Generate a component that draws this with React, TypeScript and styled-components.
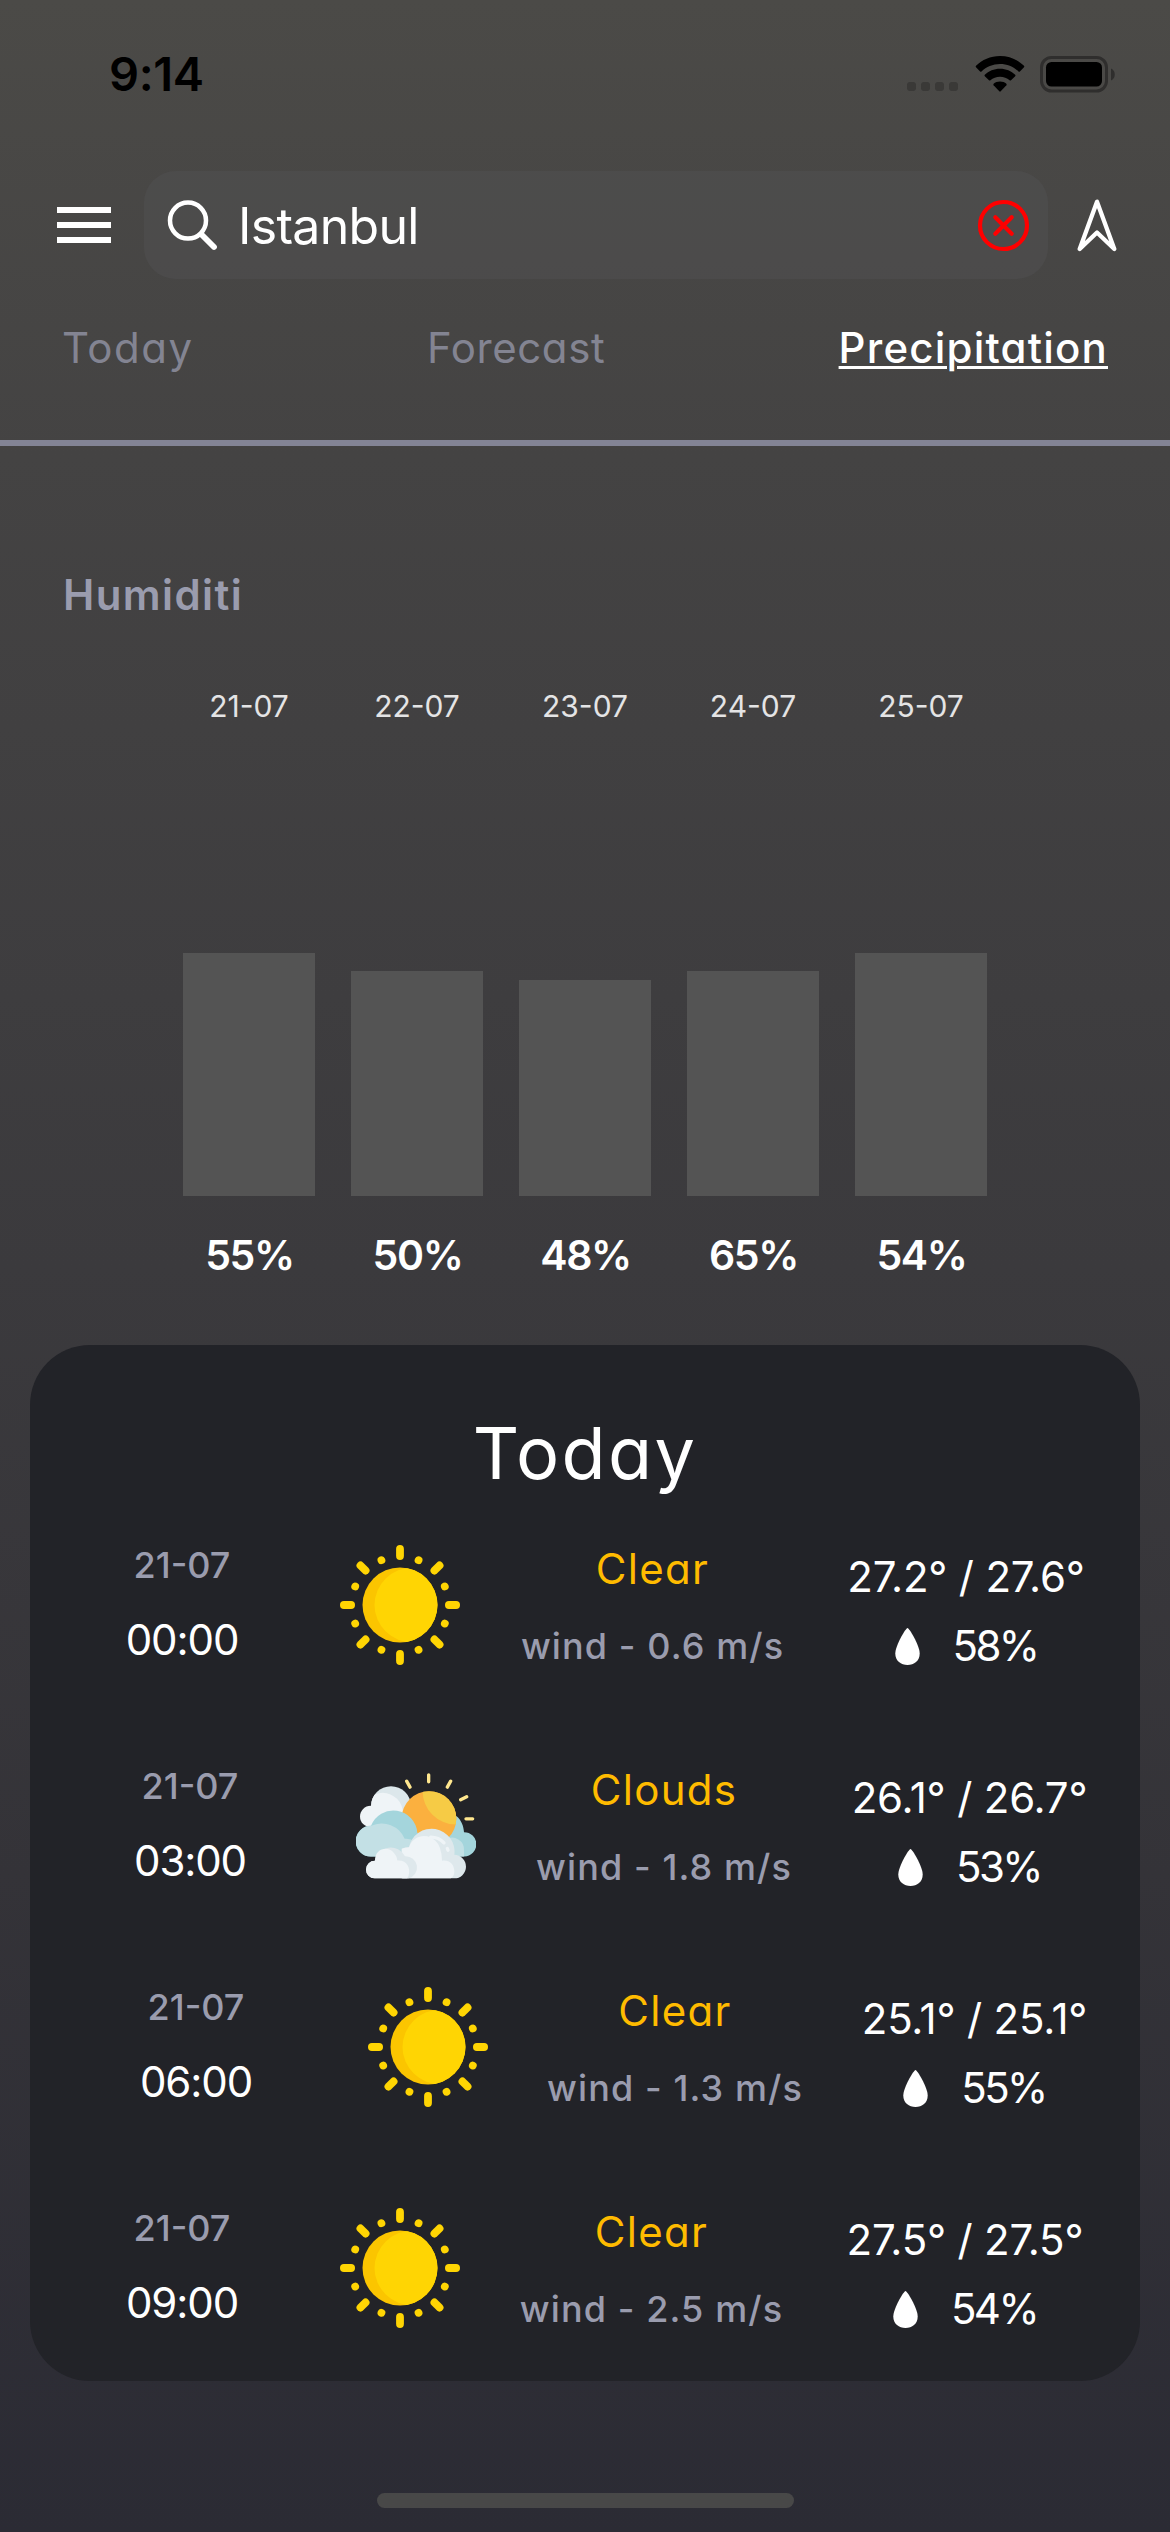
import React from "react";
import styled, { createGlobalStyle } from "styled-components";

const GlobalStyle = createGlobalStyle`
  * { box-sizing: border-box; }
  body {
    margin: 0;
    font-family: Inter, "Open Sans", sans-serif;
    color: #fff;
    background: #2c2c35;
  }
`;

const Screen = styled.main`
  width: 1170px;
  height: 2532px;
  display: flex;
  flex-direction: column;
  overflow: hidden;
  background: linear-gradient(180deg, #4b4a47 0%, #444343 18%, #3b3a3d 50%, #343338 74%, #2b2b34 100%);
  font-feature-settings: "cv11";
`;

const StatusBar = styled.header`
  height: 148px;
  display: flex;
  align-items: center;
  justify-content: space-between;
  padding: 0 54px 0 109px;
  color: #000;
`;

const Clock = styled.span`
  font-size: 47px;
  font-weight: 600;
  line-height: 60px;
  letter-spacing: -0.4px;
  font-feature-settings: normal;
`;

const StatusIcons = styled.div`
  display: flex;
  align-items: center;
`;

const Header = styled.div`
  height: 108px;
  margin-top: 23px;
  padding: 0 52px 0 57px;
  display: flex;
  align-items: center;
`;

const MenuButton = styled.button`
  width: 54px;
  height: 36px;
  padding: 0;
  border: 0;
  background: none;
  display: flex;
  flex-direction: column;
  justify-content: space-between;
`;

const MenuLine = styled.span`
  width: 54px;
  height: 6px;
  background: #fff;
`;

const SearchBox = styled.div`
  width: 904px;
  height: 108px;
  margin-left: 33px;
  margin-right: 28px;
  padding: 0 18px 0 23px;
  display: flex;
  align-items: center;
  border-radius: 32px;
  background: rgba(85, 85, 88, 0.38);
`;

const SearchText = styled.span`
  flex: 1;
  padding: 2px 0 0 17px;
  font-size: 50px;
  line-height: 60px;
  letter-spacing: -0.7px;
  font-feature-settings: normal;
`;

const Tabs = styled.nav`
  height: 50px;
  margin-top: 44px;
  padding: 0 62px;
  display: flex;
  justify-content: space-between;
`;

const Tab = styled.a<{ $active?: boolean; $tracking: number }>`
  font-size: 42px;
  line-height: 50px;
  white-space: nowrap;
  letter-spacing: ${(p) => p.$tracking}px;
  font-weight: ${(p) => (p.$active ? 500 : 400)};
  color: ${(p) => (p.$active ? "#fff" : "#838492")};
  text-decoration: ${(p) => (p.$active ? "underline" : "none")};
  text-decoration-thickness: 3px;
  text-underline-offset: 3px;
`;

const Divider = styled.div`
  height: 6px;
  flex: none;
  margin-top: 67px;
  background: #838495;
`;

const SectionTitle = styled.h2`
  margin: 124px 0 0 63px;
  font-size: 42px;
  font-weight: 600;
  line-height: 50px;
  letter-spacing: 1.4px;
  color: #9a9cae;
`;

const Chart = styled.section`
  margin-top: 66px;
  display: flex;
  justify-content: center;
  gap: 36px;
`;

const ChartColumn = styled.div`
  width: 132px;
  display: flex;
  flex-direction: column;
  align-items: center;
`;

const ChartDate = styled.span`
  font-size: 30px;
  line-height: 40px;
  color: #e4e4e5;
  white-space: nowrap;
`;

const BarTrack = styled.div`
  width: 132px;
  height: 470px;
  display: flex;
  align-items: flex-end;
`;

const Bar = styled.div`
  width: 132px;
  background: #545454;
`;

const ChartValue = styled.span`
  margin-top: 34px;
  padding-left: 1px;
  font-size: 41px;
  font-weight: 600;
  line-height: 50px;
  letter-spacing: -1.4px;
`;

const Card = styled.section`
  height: 1036px;
  flex: none;
  margin: 65px 30px 0;
  padding-top: 63px;
  border-radius: 60px;
  background: #222328;
`;

const CardTitle = styled.h1`
  margin: 0;
  height: 90px;
  text-align: center;
  font-size: 72px;
  font-weight: 400;
  line-height: 90px;
  letter-spacing: 2.4px;
`;

const Row = styled.div`
  height: 221px;
  padding-right: 55px;
  display: flex;
  align-items: flex-start;
`;

const TimeCell = styled.div`
  flex: 1;
  padding: 45px 6px 0 0;
  display: flex;
  flex-direction: column;
  align-items: center;
  gap: 28px;
`;

const IconCell = styled.div`
  width: 120px;
  height: 120px;
  margin-top: 47px;
`;

const InfoCell = styled.div<{ $width: number }>`
  width: ${(p) => p.$width}px;
  margin-left: 61px;
  padding-top: 46px;
  display: flex;
  flex-direction: column;
  align-items: center;
  gap: 30px;
`;

const TempCell = styled.div<{ $width: number }>`
  width: ${(p) => p.$width}px;
  margin-left: 63px;
  padding-top: 54px;
  display: flex;
  flex-direction: column;
  align-items: center;
  gap: 19px;
`;

const Muted = styled.span<{ $tracking?: number }>`
  font-size: 36px;
  font-weight: 500;
  line-height: 44px;
  letter-spacing: ${(p) => p.$tracking ?? 0}px;
  white-space: nowrap;
  color: #9a9cae;
`;

const Value = styled.span<{ $tracking?: number; $color?: string }>`
  font-size: 42px;
  line-height: 50px;
  letter-spacing: ${(p) => p.$tracking ?? 0}px;
  white-space: nowrap;
  color: ${(p) => p.$color ?? "#fff"};
`;

const Humidity = styled.div`
  display: flex;
  align-items: center;
  gap: 33px;
`;

const HomeIndicator = styled.div`
  width: 417px;
  height: 15px;
  flex: none;
  margin: 112px auto 0;
  border-radius: 8px;
  background: #484848;
`;

const SignalDots = () => (
  <svg width="52" height="10" viewBox="0 0 52 10" style={{ marginTop: 26, marginRight: 16 }}>
    {[0, 14, 28, 42].map((x) => (
      <rect key={x} x={x} y="0" width="9" height="9" rx="3" fill="#3a3937" />
    ))}
  </svg>
);

const Wifi = () => (
  <svg width="50" height="37" viewBox="0 0 50 37" style={{ marginRight: 15 }}>
    <path d="M25 0C34.500 0 43 3.800 49 9.800Q49.600 10.500 49 11.200L44.900 15.400Q44.200 16 43.500 15.400C38.600 10.700 32.200 7.900 25 7.900S11.400 10.700 6.500 15.400Q5.800 16 5.100 15.400L1 11.200Q.4 10.500 1 9.800C7 3.800 15.500 0 25 0Z" />
    <path d="M25 12.800C31 12.800 36.300 15.100 40.200 18.800Q40.900 19.500 40.200 20.200L36 24.300Q35.300 24.900 34.600 24.300C32 22 28.700 20.700 25 20.700S18 22 15.400 24.300Q14.700 24.900 14 24.300L9.800 20.200Q9.100 19.500 9.800 18.800C13.700 15.100 19 12.800 25 12.800Z" />
    <path d="M25 25.500C27.600 25.500 29.800 26.300 31.400 27.800Q32 28.500 31.400 29.200L25.700 35.300Q25 36 24.300 35.300L18.600 29.200Q18 28.500 18.600 27.800C20.200 26.300 22.400 25.500 25 25.500Z" />
  </svg>
);

const Battery = () => (
  <svg width="76" height="37" viewBox="0 0 76 37">
    <rect x="1.500" y="1.500" width="65" height="33.500" rx="10" fill="none" stroke="#2f2e2d" strokeWidth="3" />
    <rect x="6" y="6" width="56" height="24.500" rx="5.500" />
    <path d="M71 12.500c5 1.800 5 10.200 0 12z" fill="#2f2e2d" />
  </svg>
);

const SearchIcon = () => (
  <svg width="54" height="54" viewBox="0 0 54 54" fill="none" stroke="#fff" strokeLinecap="round">
    <circle cx="21" cy="22.600" r="18" strokeWidth="4.500" />
    <path d="M34.500 36.500L47 49" strokeWidth="5.800" />
  </svg>
);

const ClearIcon = () => (
  <svg width="54" height="54" viewBox="0 0 54 54" fill="none" stroke="#f00" strokeLinecap="round">
    <circle cx="27.500" cy="27.500" r="23.500" strokeWidth="4.200" />
    <path d="M19.300 19.300L35.700 35.700M35.700 19.300L19.300 35.700" strokeWidth="4.200" />
  </svg>
);

const NavigateIcon = () => (
  <svg width="42" height="54" viewBox="0 0 42 54" fill="none" stroke="#fff" strokeWidth="4.300" strokeLinejoin="round">
    <path d="M21 3.700L3.700 51L21 34.500L38.300 51Z" />
  </svg>
);

const DropIcon = () => (
  <svg width="25" height="37" viewBox="0 0 25 37" fill="#fff">
    <path d="M12.500 0C14.200 0 24.700 17.500 24.700 25.500C24.700 33 19 37 12.500 37S.3 33 .3 25.500C.3 17.500 10.800 0 12.500 0Z" />
  </svg>
);

const SunIcon = () => (
  <svg width="120" height="120" viewBox="-60 -60 120 120">
    <defs>
      <clipPath id="sun-disc">
        <circle r="37.500" />
      </clipPath>
    </defs>
    <circle r="37.500" fill="#fbc500" />
    <ellipse cx="13" cy="0" rx="38.500" ry="37.500" fill="#ffd503" clipPath="url(#sun-disc)" />
    {[0, 45, 90, 135, 180, 225, 270, 315].map((a) => (
      <g key={a} transform={`rotate(${a})`}>
        <rect x="-3.900" y={a % 90 ? -59.800 : -60} width="7.800" height="15" rx="3.900" fill="#ffd503" />
        <circle cx="0" cy="-48.500" r="3.900" transform="rotate(22.500)" fill="#ffd503" />
      </g>
    ))}
  </svg>
);

const CloudsIcon = () => (
  <svg width="120" height="120" viewBox="51 19.500 360 360">
    <defs>
      <clipPath id="back-cloud">
        <circle cx="156" cy="140" r="60" />
      </clipPath>
      <clipPath id="cloud-sun">
        <circle cx="270" cy="177" r="82" />
      </clipPath>
      <clipPath id="front-base">
        <rect x="51" y="200" width="360" height="157" />
      </clipPath>
    </defs>
    <g stroke="#ffe78f" strokeWidth="10" strokeLinecap="round">
      <path d="M269 46V67M203 65L213 83M335 65L325 83M365 121L383 112M381 178H401" />
    </g>
    <circle cx="156" cy="140" r="60" fill="#dce7eb" />
    <circle cx="131" cy="161" r="61" fill="#eff4f7" clipPath="url(#back-cloud)" />
    <circle cx="95" cy="171" r="32" fill="#eff4f7" />
    <path d="M330 291V170h23C367 182 374 199 375 218A36.500 36.500 0 1 1 376 291Z" fill="#a4d5dc" />
    <path d="M320 291V240A36 36 0 0 1 375 274V291Z" fill="#c3e0e5" />
    <circle cx="270" cy="177" r="82" fill="#fbb03f" />
    <circle cx="351" cy="95" r="100" fill="#f6cb45" clipPath="url(#cloud-sun)" />
    <path d="M95 291A45 45 0 1 1 96 199A72 72 0 0 1 235 220L260 240V291Z" fill="#a4d5dc" />
    <path d="M96 291A45 45 0 1 1 97 199A74 74 0 0 1 197 238Q214 236 230 248V291Z" fill="#c3e0e5" />
    <g clipPath="url(#front-base)">
      <path d="M190 267A47 47 0 0 1 210 263A69 69 0 0 1 346 286A35.500 35.500 0 0 1 345 357H190Z" fill="#dee8ec" />
      <path d="M188 268A47 47 0 0 1 210 263C225 223 268 222 289 244Q308 260 309 304C330 300 346 315 346 335Q346 350 335 357H188Z" fill="#eff4f7" />
      <path d="M107 357A26.500 26.500 0 1 1 108 304A48 48 0 0 1 198 290A34 34 0 0 1 208 357Z" fill="#dee8ec" />
      <path d="M107 357A26.500 26.500 0 1 1 108 304C107 266 145 260 160 275Q174 288 175 303C202 300 216 325 209 347Q208 353 204 357Z" fill="#eff4f7" />
    </g>
    <path d="M275 233Q299 233 315 250M325 267L327 272" fill="none" stroke="#eff4f7" strokeWidth="10" strokeLinecap="round" />
  </svg>
);

const days = [
  { date: "21-07", value: "55%", height: 243 },
  { date: "22-07", value: "50%", height: 225 },
  { date: "23-07", value: "48%", height: 216 },
  { date: "24-07", value: "65%", height: 225 },
  { date: "25-07", value: "54%", height: 243 },
];

const hours = [
  { time: "00:00", sky: "Clear", wind: "wind - 0.6 m/s", temps: "27.2° / 27.6°", humidity: "58%", info: 263, temp: 238 },
  { time: "03:00", sky: "Clouds", wind: "wind - 1.8 m/s", temps: "26.1° / 26.7°", humidity: "53%", info: 254, temp: 231 },
  { time: "06:00", sky: "Clear", wind: "wind - 1.3 m/s", temps: "25.1° / 25.1°", humidity: "55%", info: 252, temp: 221 },
  { time: "09:00", sky: "Clear", wind: "wind - 2.5 m/s", temps: "27.5° / 27.5°", humidity: "54%", info: 261, temp: 240 },
];

export default function App() {
  return (
    <Screen>
      <GlobalStyle />
      <StatusBar>
        <Clock>9:14</Clock>
        <StatusIcons>
          <SignalDots />
          <Wifi />
          <Battery />
        </StatusIcons>
      </StatusBar>
      <Header>
        <MenuButton aria-label="Menu">
          <MenuLine />
          <MenuLine />
          <MenuLine />
        </MenuButton>
        <SearchBox>
          <SearchIcon />
          <SearchText>Istanbul</SearchText>
          <ClearIcon />
        </SearchBox>
        <NavigateIcon />
      </Header>
      <Tabs>
        <Tab $tracking={1.5}>Today</Tab>
        <Tab $tracking={0.6}>Forecast</Tab>
        <Tab $active $tracking={1.2}>Precipitation</Tab>
      </Tabs>
      <Divider />
      <SectionTitle>Humiditi</SectionTitle>
      <Chart>
        {days.map((d) => (
          <ChartColumn key={d.date}>
            <ChartDate>{d.date}</ChartDate>
            <BarTrack>
              <Bar style={{ height: d.height }} />
            </BarTrack>
            <ChartValue>{d.value}</ChartValue>
          </ChartColumn>
        ))}
      </Chart>
      <Card>
        <CardTitle>Today</CardTitle>
        {hours.map((h) => (
          <Row key={h.time}>
            <TimeCell>
              <Muted>21-07</Muted>
              <Value $tracking={-1.1}>{h.time}</Value>
            </TimeCell>
            <IconCell>{h.sky === "Clouds" ? <CloudsIcon /> : <SunIcon />}</IconCell>
            <InfoCell $width={h.info}>
              <Value $color="#ffbb00" $tracking={1.3}>{h.sky}</Value>
              <Muted $tracking={1.1}>{h.wind}</Muted>
            </InfoCell>
            <TempCell $width={h.temp}>
              <Value $tracking={-0.2}>{h.temps}</Value>
              <Humidity>
                <DropIcon />
                <Value $tracking={-2.6}>{h.humidity}</Value>
              </Humidity>
            </TempCell>
          </Row>
        ))}
      </Card>
      <HomeIndicator />
    </Screen>
  );
}
